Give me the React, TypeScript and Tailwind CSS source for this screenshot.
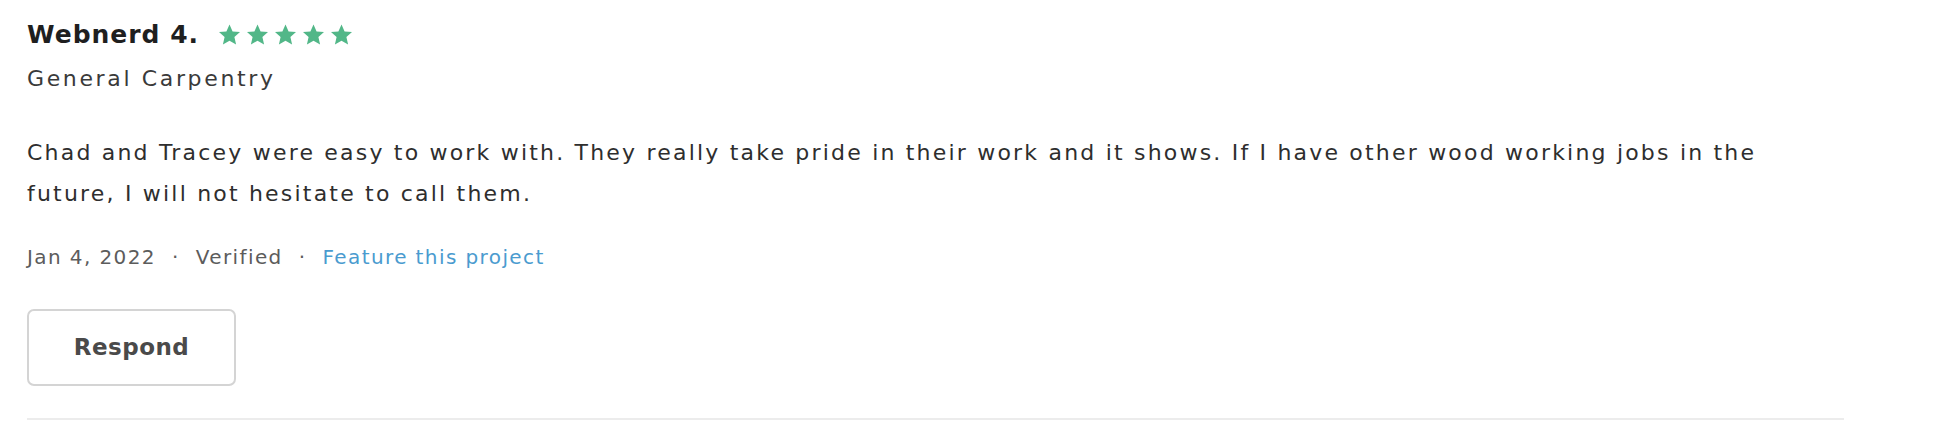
const Star = () => (
  <svg viewBox="0 0 24 24" className="w-[25px] h-[24px]" fill="#52b788">
    <path d="M12 1.5l3.1 6.9 7.4.7-5.6 5 1.7 7.4L12 17.7l-6.6 3.8 1.7-7.4-5.6-5 7.4-.7z" />
  </svg>
);

export default function App() {
  return (
    <div className="w-full bg-white [font-family:'DejaVu_Sans',sans-serif] text-[#2b2b2b]">
      <div className="ml-[27px] mr-[94px] pt-[17px] border-b-2 border-[#ececec] pb-[32px]">
        <div className="flex items-center gap-[18px]">
          <h3 className="text-[25px] font-bold text-[#1f1f1f] leading-[36px] tracking-[0.04em]">Webnerd 4.</h3>
          <div className="flex gap-[3px]">
            <Star />
            <Star />
            <Star />
            <Star />
            <Star />
          </div>
        </div>
        <p className="mt-[9px] text-[22px] leading-[34px] text-[#3a3a3a] tracking-[0.12em]">General Carpentry</p>
        <p className="mt-[36px] text-[22px] leading-[41px] text-[#2e2e2e] max-w-[1780px] tracking-[0.1em]">
          Chad and Tracey were easy to work with. They really take pride in their work and it shows. If I have other wood working jobs in the future, I will not hesitate to call them.
        </p>
        <div className="mt-[28px] flex items-center text-[20px] leading-[30px] text-[#5c5c5c] tracking-[0.07em]">
          <span>Jan 4, 2022</span>
          <span className="mx-[16px]">·</span>
          <span>Verified</span>
          <span className="mx-[16px]">·</span>
          <a className="text-[#4a9bcf]">Feature this project</a>
        </div>
        <button className="mt-[37px] w-[209px] h-[77px] rounded-[7px] border-2 border-[#d4d4d4] bg-white text-[23px] font-bold text-[#4a4a4a] tracking-[0.02em]">
          Respond
        </button>
      </div>
    </div>
  );
}
